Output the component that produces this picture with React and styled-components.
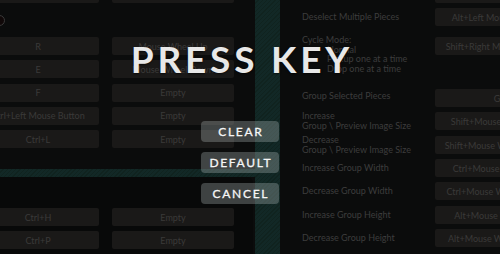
import React from "react";
import styled, { createGlobalStyle } from "styled-components";

// ====== Colors ======
const colors = {
  page: "#0b0c0c",
  deep: "#080909",
  key: "#1a1918",
  keyText: "#3b3a39",
  label: "#3d3d3d",
  teal: "#122826",
  tealLine: "#10231f",
  title: "#e8e8e8",
};

const hatch = `repeating-linear-gradient(135deg, ${colors.teal} 0 2px, ${colors.tealLine} 2px 3px)`;

const GlobalStyle = createGlobalStyle`
  html, body {
    margin: 0;
    padding: 0;
    background: ${colors.page};
    overflow: hidden;
  }
  * { box-sizing: border-box; }
`;

// ====== Layout ======
const Screen = styled.div`
  position: relative;
  width: 500px;
  height: 254px;
  overflow: hidden;
  display: flex;
  font-family: "Lato", "Liberation Sans", sans-serif;
  background: ${colors.page};
`;

const LeftPanel = styled.div`
  width: 255px;
  flex: none;
  display: flex;
  flex-direction: column;
`;

const KeyGrid = styled.div`
  display: grid;
  grid-template-columns: 122px 122px;
  column-gap: 13px;
  row-gap: 5.25px;
  grid-auto-rows: 18px;
  margin-left: -23px;
`;

const KeyButton = styled.div`
  height: 18px;
  width: ${(p) => p.$width || "auto"};
  border-radius: 2px;
  background: ${colors.key};
  color: ${colors.keyText};
  font-size: 9px;
  white-space: nowrap;
  overflow: hidden;
  display: flex;
  align-items: center;
  justify-content: center;
`;

const CircleRow = styled.div`
  height: 23.5px;
  margin: 5.25px 0 5.25px -23px;
  display: flex;
  align-items: center;
`;

const Radio = styled.div`
  width: 11px;
  height: 11px;
  margin-left: 17px;
  border-radius: 50%;
  border: 1px solid #3a3a3a;
  background: #100808;
`;

const HBar = styled.div`
  height: 8px;
  margin-top: 21px;
  background: ${hatch};
`;

const BottomSection = styled.div`
  flex: 1;
  width: 253px;
  padding-top: 31px;
  background: ${colors.deep};
  border-top-right-radius: 6px;
`;

const VBar = styled.div`
  width: 25px;
  flex: none;
  background: ${hatch};
`;

const RightPanel = styled.div`
  flex: 1;
  padding-left: 22px;
  display: flex;
  flex-direction: column;
  margin-top: -15px;
`;

const BindRow = styled.div`
  display: flex;
  align-items: ${(p) => (p.$multi ? "flex-start" : "center")};
  height: ${(p) => p.$height || 18}px;
  margin-top: ${(p) => p.$gap ?? 5.25}px;
  flex: none;
`;

const Label = styled.div`
  width: 133px;
  flex: none;
  color: ${colors.label};
  font-size: 9px;
  line-height: 9.6px;
  white-space: nowrap;
  margin-top: ${(p) => p.$lift || 0}px;
`;

const Indent = styled.div`
  padding-left: 25px;
`;

// ====== Modal ======
const Overlay = styled.div`
  position: absolute;
  inset: 0;
  padding: 40px 20px 0 0;
  display: flex;
  flex-direction: column;
  align-items: center;
`;

const Title = styled.h1`
  margin: 0;
  font-size: 37px;
  line-height: 37px;
  font-weight: 700;
  letter-spacing: 3.8px;
  padding-left: 3.8px;
  color: ${colors.title};
  text-shadow: 0 1px 2px rgba(0, 0, 0, 0.6);
`;

const Actions = styled.div`
  margin-top: 44px;
  display: flex;
  flex-direction: column;
  gap: 10px;
`;

const ActionButton = styled.button`
  width: 78px;
  height: 21px;
  border: none;
  border-radius: 4px;
  background: rgba(190, 200, 198, 0.3);
  color: #f6f6f6;
  font-family: "Lato", "Liberation Sans", sans-serif;
  font-size: 12px;
  font-weight: 400;
  letter-spacing: 1.7px;
  padding: 0 0 0 1.7px;
  display: flex;
  align-items: center;
  justify-content: center;
  -webkit-text-stroke: 0.3px #f6f6f6;
`;

const topKeys = [
  ["R", "Mouse Wheel Up"],
  ["E", "Mouse Wheel Down"],
  ["F", "Empty"],
  ["Ctrl+Left Mouse Button", "Empty"],
  ["Ctrl+L", "Empty"],
];

const bottomKeys = [
  ["Ctrl+H", "Empty"],
  ["Ctrl+P", "Empty"],
];

const bindings = [
  { label: ["Increase", "Group \\ Preview Image Size"], key: "Shift+Mouse Wheel Up", gap: 5 },
  { label: ["Decrease", "Group \\ Preview Image Size"], key: "Shift+Mouse Wheel Down", gap: 6 },
  { label: ["Increase Group Width"], key: "Ctrl+Mouse Wheel Up", gap: 5 },
  { label: ["Decrease Group Width"], key: "Ctrl+Mouse Wheel Down", gap: 5 },
  { label: ["Increase Group Height"], key: "Alt+Mouse Wheel Up", gap: 6 },
  { label: ["Decrease Group Height"], key: "Alt+Mouse Wheel Down", gap: 5 },
];

const App = () => {
  return (
    <Screen>
      <GlobalStyle />
      <LeftPanel>
        <KeyGrid style={{ marginTop: -15 }}>
          <KeyButton />
          <KeyButton />
        </KeyGrid>
        <CircleRow>
          <Radio />
        </CircleRow>
        <KeyGrid>
          {topKeys.map(([a, b], i) => (
            <React.Fragment key={i}>
              <KeyButton>{a}</KeyButton>
              <KeyButton>{b}</KeyButton>
            </React.Fragment>
          ))}
        </KeyGrid>
        <HBar />
        <BottomSection>
          <KeyGrid>
            {bottomKeys.map(([a, b], i) => (
              <React.Fragment key={i}>
                <KeyButton>{a}</KeyButton>
                <KeyButton>{b}</KeyButton>
              </React.Fragment>
            ))}
          </KeyGrid>
        </BottomSection>
      </LeftPanel>

      <VBar />

      <RightPanel>
        <BindRow $gap={0}>
          <Label />
          <KeyButton $width="124px" />
        </BindRow>
        <BindRow $gap={5}>
          <Label>Deselect Multiple Pieces</Label>
          <KeyButton $width="124px">Alt+Left Mouse Button</KeyButton>
        </BindRow>
        <BindRow $gap={11} $height={47} $multi>
          <Label $lift={-2}>
            Cycle Mode:
            <Indent>Normal</Indent>
            <Indent>Pickup one at a time</Indent>
            <Indent>Drop one at a time</Indent>
          </Label>
          <KeyButton $width="124px">Shift+Right Mouse Button</KeyButton>
        </BindRow>
        <BindRow $gap={5}>
          <Label $lift={-5}>Group Selected Pieces</Label>
          <KeyButton $width="124px">G</KeyButton>
        </BindRow>
        {bindings.map((b) => (
          <BindRow key={b.key} $gap={b.gap}>
            <Label>
              {b.label.map((line) => (
                <div key={line}>{line}</div>
              ))}
            </Label>
            <KeyButton $width="124px">{b.key}</KeyButton>
          </BindRow>
        ))}
      </RightPanel>

      <Overlay>
        <Title>PRESS KEY</Title>
        <Actions>
          <ActionButton>CLEAR</ActionButton>
          <ActionButton>DEFAULT</ActionButton>
          <ActionButton>CANCEL</ActionButton>
        </Actions>
      </Overlay>
    </Screen>
  );
};

export default App;
